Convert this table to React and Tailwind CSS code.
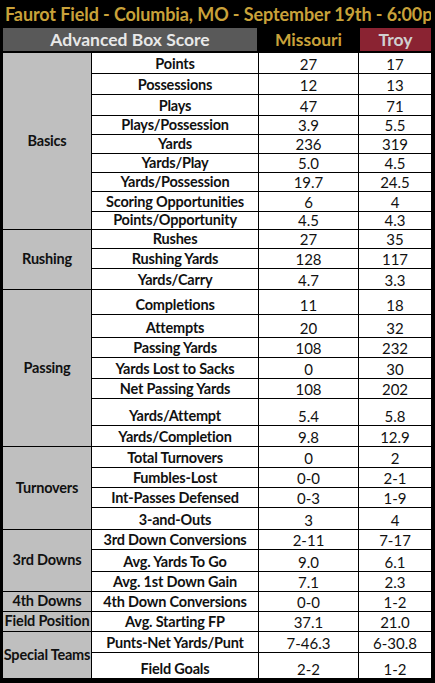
import React from "react";

const SECTIONS = [
  {
    name: "Basics",
    span: "row-span-9",
    rows: [
      ["Points", "27", "17", "h-[20px]"],
      ["Possessions", "12", "13", "h-[20px]"],
      ["Plays", "47", "71", "h-[20px]"],
      ["Plays/Possession", "3.9", "5.5", "h-[18px]"],
      ["Yards", "236", "319", "h-[18px]"],
      ["Yards/Play", "5.0", "4.5", "h-[18px]"],
      ["Yards/Possession", "19.7", "24.5", "h-[18px]"],
      ["Scoring Opportunities", "6", "4", "h-[19px]"],
      ["Points/Opportunity", "4.5", "4.3", "h-[17px]"],
    ],
  },
  {
    name: "Rushing",
    span: "row-span-3",
    rows: [
      ["Rushes", "27", "35", "h-[18px]"],
      ["Rushing Yards", "128", "117", "h-[19px]"],
      ["Yards/Carry", "4.7", "3.3", "h-[20px]"],
    ],
  },
  {
    name: "Passing",
    span: "row-span-7",
    rows: [
      ["Completions", "11", "18", "h-[24px]"],
      ["Attempts", "20", "32", "h-[22px]"],
      ["Passing Yards", "108", "232", "h-[19px]"],
      ["Yards Lost to Sacks", "0", "30", "h-[20px]"],
      ["Net Passing Yards", "108", "202", "h-[19px]"],
      ["Yards/Attempt", "5.4", "5.8", "h-[26px]"],
      ["Yards/Completion", "9.8", "12.9", "h-[20px]"],
    ],
  },
  {
    name: "Turnovers",
    span: "row-span-4",
    rows: [
      ["Total Turnovers", "0", "2", "h-[20px]"],
      ["Fumbles-Lost", "0-0", "2-1", "h-[19px]"],
      ["Int-Passes Defensed", "0-3", "1-9", "h-[19px]"],
      ["3-and-Outs", "3", "4", "h-[21px]"],
    ],
  },
  {
    name: "3rd Downs",
    span: "row-span-3",
    rows: [
      ["3rd Down Conversions", "2-11", "7-17", "h-[19px]"],
      ["Avg. Yards To Go", "9.0", "6.1", "h-[21px]"],
      ["Avg. 1st Down Gain", "7.1", "2.3", "h-[19px]"],
    ],
  },
  {
    name: "4th Downs",
    span: "row-span-1",
    rows: [["4th Down Conversions", "0-0", "1-2", "h-[19px]"]],
  },
  {
    name: "Field Position",
    span: "row-span-1",
    rows: [["Avg. Starting FP", "37.1", "21.0", "h-[19px]"]],
  },
  {
    name: "Special Teams",
    span: "row-span-2",
    rows: [
      ["Punts-Net Yards/Punt", "7-46.3", "6-30.8", "h-[20px]"],
      ["Field Goals", "2-2", "1-2", "h-[25px]"],
    ],
  },
];

const FONT = "font-['Lato','Open_Sans',sans-serif]";

export default function App() {
  return (
    <div className={`w-[435px] h-[683px] bg-black pl-[3px] pr-[4px] overflow-hidden ${FONT}`}>
      <div className="h-[28px] flex items-center whitespace-nowrap overflow-hidden pl-[2px]">
        <span className="text-[#c9a23a] font-bold text-[18px] tracking-[-0.1px] leading-none">
          Faurot Field - Columbia, MO - September 19th - 6:00p
        </span>
      </div>
      <div className="h-[23px] flex">
        <div className="w-[254px] bg-[#595959] flex items-center justify-center text-[#e8e8e8] font-bold text-[17.5px] leading-none">
          Advanced Box Score
        </div>
        <div className="w-[103px] flex items-center justify-center text-[#c9a23a] font-bold text-[17.5px] leading-none">
          Missouri
        </div>
        <div className="w-[71px] bg-[#8a2332] flex items-center justify-center text-[#d0d0d0] font-bold text-[17.5px] leading-none">
          Troy
        </div>
      </div>
      <div className="h-[2px]" />
      <div className="grid grid-cols-[88px_166px_99px_72px] gap-px bg-black">
        {SECTIONS.map((sec) => (
          <React.Fragment key={sec.name}>
            <div
              className={`${sec.span} bg-[#bfbfbf] flex items-center justify-center text-center font-bold text-[14.5px] text-[#111] whitespace-nowrap leading-none tracking-[-0.2px]`}
            >
              {sec.name}
            </div>
            {sec.rows.map(([label, a, b, h]) => (
              <React.Fragment key={label}>
                <div
                  className={`${h} bg-white flex items-end justify-center font-bold text-[14.5px] text-[#111] leading-[16px] pb-[1px] whitespace-nowrap tracking-[-0.2px]`}
                >
                  {label}
                </div>
                <div className="bg-white flex items-end justify-center text-[15px] text-[#111] leading-[16px] pb-[1px]">
                  {a}
                </div>
                <div className="bg-white flex items-end justify-center text-[15px] text-[#111] leading-[16px] pb-[1px]">
                  {b}
                </div>
              </React.Fragment>
            ))}
          </React.Fragment>
        ))}
      </div>
    </div>
  );
}
